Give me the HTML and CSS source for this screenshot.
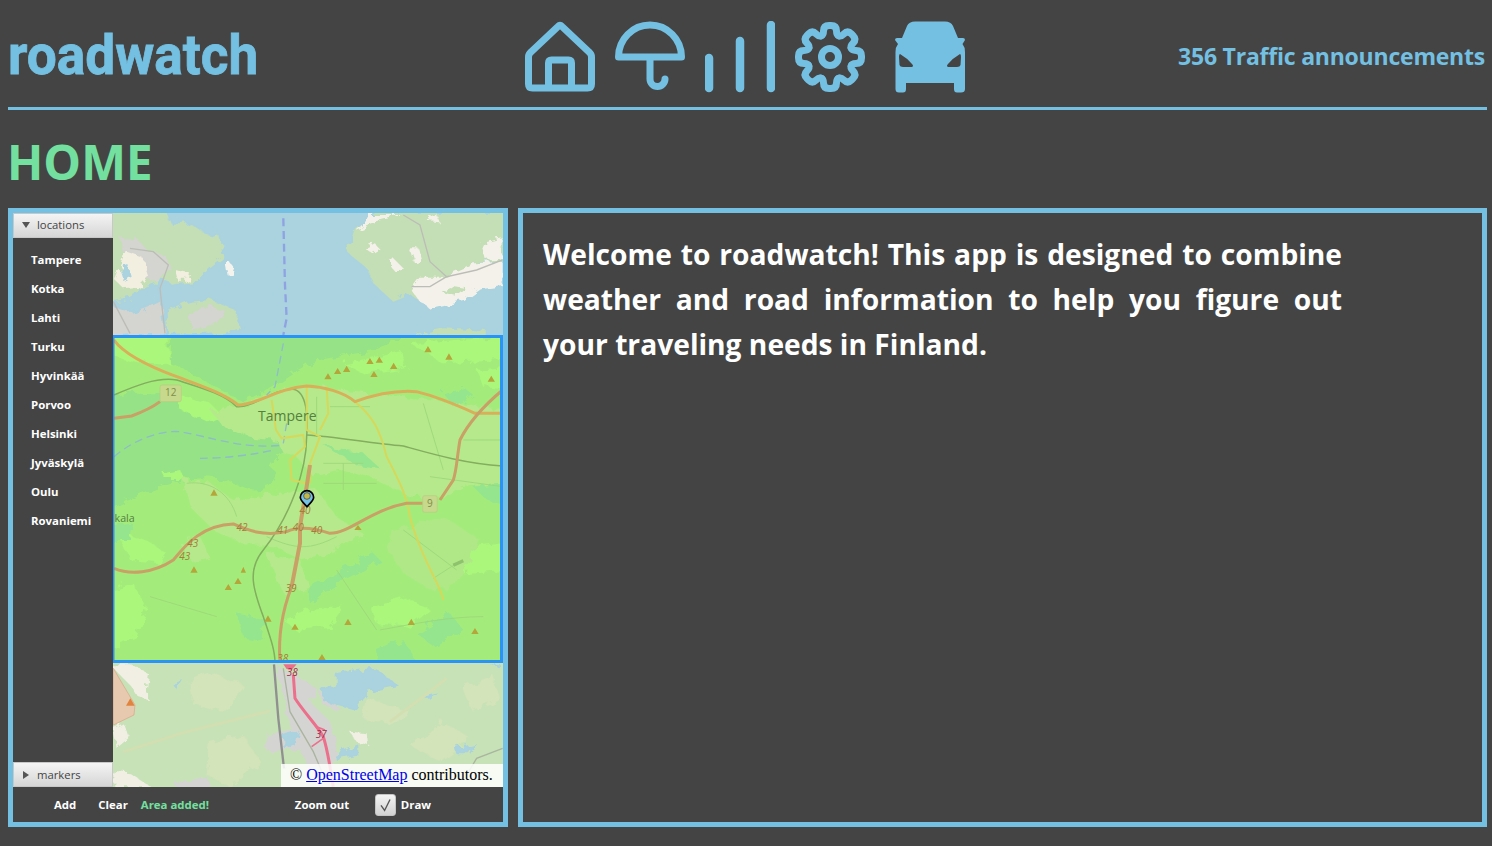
FILE: index.html
```html
<!DOCTYPE html>
<html>
  <head>
    <title>roadwatch</title>
    <link rel="stylesheet" href="styles.css">
  </head>
  <body>
    <header class="top-bar">
      <div class="logo"><span class="logo-text">roadwatch</span></div>

      <!-- Main navigation icons -->
      <nav class="nav-icons">
        <svg class="icon" viewBox="0 0 70 72">
          <path d="M3.5 36 Q3.5 33 6 31 L33 5.5 Q35 3.5 37 5.5 L64 31 Q66.5 33 66.5 36 V63 Q66.5 67 62.5 67 H7.5 Q3.5 67 3.5 63 Z M23.5 67 V42 Q23.5 39 26.5 39 H43.5 Q46.5 39 46.5 42 V67"/>
        </svg>
        <svg class="icon" viewBox="0 0 70 72">
          <path d="M3.5 36 A31.5 32 0 0 1 66.5 36 Z M35 38 V58 A7.5 7.5 0 0 0 50 58"/>
        </svg>
        <svg class="icon icon-bars" viewBox="0 0 70 72">
          <path d="M4 37 V67 M35 20 V67 M66 4 V67"/>
        </svg>
        <svg class="icon" viewBox="-35 -36 70 72">
          <defs>
            <path id="gear-tooth" d="M-8.8 -21.2 Q-6.5 -22 -6.5 -26 Q-6.5 -31.5 -1 -31.5 H1 Q6.5 -31.5 6.5 -26 Q6.5 -22 8.8 -21.2"/>
          </defs>
          <use href="#gear-tooth"/>
          <use href="#gear-tooth" transform="rotate(45)"/>
          <use href="#gear-tooth" transform="rotate(90)"/>
          <use href="#gear-tooth" transform="rotate(135)"/>
          <use href="#gear-tooth" transform="rotate(180)"/>
          <use href="#gear-tooth" transform="rotate(225)"/>
          <use href="#gear-tooth" transform="rotate(270)"/>
          <use href="#gear-tooth" transform="rotate(315)"/>
          <circle r="8.5"/>
        </svg>
        <svg class="icon icon-car" viewBox="0 0 70 72">
          <path class="car-body" d="M20 0.5 H50 Q56 0.5 58 5 L63 17 H68 Q70 17 70 19 L67.5 23 Q70 26 70 31 V68 Q70 71.5 66 71.5 H62 Q59 71.5 59 68 V62 H11 V68 Q11 71.5 8 71.5 H4 Q0.5 71.5 0.5 68 V31 Q0.5 26 3 23 L0 19 Q0 17 2 17 H7 L12 5 Q14 0.5 20 0.5 Z"/>
          <path class="car-light" d="M5 33 Q4 33 4 36 L4.5 44 Q5 46 8 46 L17 46 Q19 45 17 43 Q12 37 5 33 Z M65 33 Q66 33 66 36 L65.5 44 Q65 46 62 46 L53 46 Q51 45 53 43 Q58 37 65 33 Z"/>
        </svg>
      </nav>

      <div class="announcements">356 Traffic announcements</div>
    </header>

    <h1 class="page-title">HOME</h1>

    <main class="panels">
      <section class="map-panel">
        <div class="map-body">
          <!-- Locations accordion -->
          <aside class="sidebar">
            <div class="accordion-head"><span class="arrow-down"></span>locations</div>
            <ul class="location-list">
              <li>Tampere</li>
              <li>Kotka</li>
              <li>Lahti</li>
              <li>Turku</li>
              <li>Hyvinkää</li>
              <li>Porvoo</li>
              <li>Helsinki</li>
              <li>Jyväskylä</li>
              <li>Oulu</li>
              <li>Rovaniemi</li>
            </ul>
            <div class="accordion-head accordion-markers"><span class="arrow-right"></span>markers</div>
          </aside>

          <div class="map">
            <svg class="map-art" viewBox="0 0 390 574">
              <defs>
                <clipPath id="top-clip"><rect width="390" height="125"/></clipPath>
                <clipPath id="area-clip"><rect x="12" y="18" width="1166" height="979"/></clipPath>
                <clipPath id="bottom-clip"><rect y="450" width="390" height="124"/></clipPath>
                <filter id="rough" x="-5%" y="-5%" width="110%" height="110%">
                  <feTurbulence type="fractalNoise" baseFrequency="0.035" numOctaves="3" seed="4" result="noise"/>
                  <feDisplacementMap in="SourceGraphic" in2="noise" scale="34"/>
                  <feGaussianBlur stdDeviation="1.2"/>
                </filter>
              </defs>

              <!-- North part of the map, above the selected area -->
              <g clip-path="url(#top-clip)">
                <rect width="390" height="125" fill="#aad3df"/>
                <g transform="translate(-3 -8) scale(0.3333)">
                  <g filter="url(#rough)">
                    <path fill="#c4dfb5" d="M0 0 H160 L185 60 L240 55 L280 85 L335 100 L340 160 L300 190 L250 235 L205 240 L165 225 L130 240 L60 280 L0 290 Z"/>
                    <path fill="#d4d4d0" d="M30 100 L80 100 L110 135 L165 150 L180 185 L150 230 L110 225 L70 170 L40 140 Z"/>
                    <path fill="#f2efe0" d="M15 225 L50 140 L95 155 L115 215 L85 245 L40 250 Z"/>
                    <path fill="#f2efe0" d="M195 195 L240 205 L235 230 L205 230 Z"/>
                    <path fill="#aad3df" d="M28 190 L55 180 L65 215 L40 228 Z"/>
                    <path fill="#aad3df" d="M62 310 L90 250 L135 235 L150 250 L130 290 L90 320 Z"/>
                    <path fill="#d4d4d0" d="M0 300 L60 325 L110 310 L150 290 L165 385 L0 395 Z"/>
                    <path fill="#c4dfb5" d="M170 320 L240 290 L300 285 L375 315 L390 370 L340 385 L175 390 Z"/>
                    <path fill="#d4d4d0" d="M240 330 L300 300 L350 320 L320 360 L240 375 Z"/>
                    <path fill="#c4dfb5" d="M735 70 L800 20 H1190 V165 L1090 175 L1060 230 L1000 280 L960 300 L900 270 L850 290 L790 235 L770 190 L712 140 Z"/>
                    <path fill="#f4f1ea" d="M735 75 L780 30 H880 L800 48 Z M850 160 L880 190 L860 205 L838 180 Z M765 130 L795 115 L812 135 L790 148 Z M900 130 L925 130 L935 170 L915 175 Z M950 50 L980 28 L990 55 Z M1115 115 L1178 100 V155 L1130 165 Z"/>
                    <path fill="#f4f1ea" d="M925 215 L1000 215 L1090 175 L1178 170 V240 L1110 250 L1060 285 L960 310 L925 285 L900 250 Z"/>
                    <path fill="#c4dfb5" d="M1010 240 L1070 250 L1040 275 L1000 265 Z M900 395 L1000 370 L1130 378 V395 Z"/>
                    <path fill="#f4f3ee" d="M345 180 L360 172 L376 192 L368 210 L350 208 Z"/>
                  </g>
                  <path fill="none" stroke="#bdbdb8" stroke-width="4" d="M880 30 L930 60 L960 170 L1010 215 L1100 195 L1178 165 M905 245 L960 245 L1010 215 M60 130 L130 140 L175 180 L150 250 L165 385 M10 290 L60 385"/>
                  <path fill="none" stroke="#8fa3e3" stroke-width="7" stroke-dasharray="24 14" d="M520 40 L525 240 L530 340 L520 390"/>
                </g>
              </g>

              <!-- Selected area, tinted green. Coordinates are 3x -->
              <g transform="translate(-3 117) scale(0.3333)" clip-path="url(#area-clip)">
                <rect x="12" y="18" width="1166" height="979" fill="#a3ec7b"/>

                <g filter="url(#rough)">
                  <!-- Lakes -->
                  <path fill="#95e386" d="M180 0 H890 C880 60 720 70 630 90 C560 110 500 170 400 215 C330 180 250 130 180 100 Z"/>
                  <path fill="#95e386" d="M0 195 C80 180 180 190 280 215 C330 280 420 320 520 330 C560 350 490 380 480 410 C530 440 470 490 420 480 C340 440 290 440 220 450 C150 470 70 500 0 540 Z"/>

                  <!-- Brighter open land -->
                  <path fill="#abf77b" d="M0 0 H170 L180 100 C120 110 40 90 0 70 Z"/>
                  <path fill="#abf77b" d="M700 100 L780 85 L870 60 L890 110 L760 130 Z M900 40 L1180 20 V90 L1000 100 Z M1100 120 L1190 110 V180 L1120 170 Z"/>
                  <path fill="#abf77b" d="M0 780 L70 760 L110 830 L80 920 L0 960 Z M20 600 L120 640 L170 670 L150 700 L60 690 Z M520 870 L600 840 L700 830 L660 890 L560 900 Z M780 830 L880 800 L960 840 L900 890 L800 880 Z M1040 660 L1178 640 V720 L1060 730 Z"/>
                  <path fill="#abf77b" d="M200 195 L300 220 L340 260 L300 280 L210 240 Z M160 430 L210 420 L230 450 L170 450 Z"/>

                  <!-- Built up parts -->
                  <path fill="#b6e98c" d="M300 240 L400 230 L480 190 L590 170 L760 185 L980 210 L1190 240 V460 L1060 470 L1010 500 L900 500 L800 450 L700 420 L610 440 L560 380 L520 370 L500 330 L420 320 L340 290 Z"/>
                  <path fill="#b6e98c" d="M220 450 L300 460 L370 510 L520 490 L620 480 L680 560 L760 610 L700 650 L580 690 L500 650 L400 640 L310 600 L240 530 Z"/>
                  <path fill="#b0e887" d="M860 600 L1000 560 L1110 630 L1060 730 L980 790 L880 730 L830 650 Z"/>
                  <path fill="#b6e98c" d="M210 640 L270 620 L300 680 L250 700 Z M470 670 L570 690 L600 770 L520 790 Z"/>

                  <!-- Small waters and wet forest -->
                  <path fill="#95e58f" d="M590 780 L660 740 L790 670 L815 695 L720 740 L640 790 L600 820 Z M1000 190 L1060 170 L1090 195 L1030 230 Z M1090 470 L1190 460 V530 L1130 510 Z M800 960 L880 930 L930 1010 H810 Z M920 910 L1020 850 L1060 900 L970 950 Z M380 850 L470 870 L450 930 L400 920 Z M0 590 L70 580 L60 630 L0 630 Z M640 345 L760 370 L810 415 L740 405 Z"/>
                </g>

                <!-- Street lines -->
                <path fill="none" stroke="#9bd679" stroke-width="2.5" d="M640 400 H760 M640 460 H800 M700 400 V480 M620 200 V320 M660 230 L780 230 M940 220 L1000 420 M1060 330 H1178 M960 440 L1178 470 M230 460 C300 450 360 490 380 560 M470 620 C560 660 600 660 680 620 M810 900 C920 880 1020 860 1120 860 M880 600 L1040 720 M120 800 L320 860 M680 720 L800 900 M1040 700 L970 745"/>
                <path fill="none" stroke="#8fc26c" stroke-width="10" d="M1060 692 L1030 706"/>

                <!-- Lake routes -->
                <path fill="none" stroke="#8fbcc9" stroke-width="4" stroke-dasharray="24 14" d="M12 380 C70 330 150 300 210 305 C300 320 400 360 520 345 M270 385 C340 385 430 375 490 360 M520 40 L495 170 L470 195 M530 280 L520 340"/>

                <!-- Rail lines -->
                <path fill="none" stroke="#83ad5f" stroke-width="4.5" d="M12 195 C70 170 140 140 200 150 C260 170 340 190 380 230 C430 235 490 175 550 178 C590 185 595 260 590 320 C590 420 540 560 460 660 C410 720 430 780 460 860 C480 920 495 960 495 997"/>
                <path fill="none" stroke="#83ad5f" stroke-width="4.5" d="M590 315 C680 320 780 340 880 348 C960 370 1060 400 1178 408"/>

                <!-- Yellow streets -->
                <path fill="none" stroke="#d6d85a" stroke-width="6" d="M590 170 V300 L630 320 L600 400 V460 M485 210 L498 300 L515 325 L580 315 L585 350 L540 390 L545 450 L590 460"/>
                <path fill="none" stroke="#d6d85a" stroke-width="6" d="M650 170 L655 250 L630 300 M735 215 C790 260 810 300 830 380 C860 440 890 490 900 560 C930 680 990 760 1000 810"/>

                <!-- Main roads -->
                <g fill="none" stroke="#c9a066" stroke-width="9">
                  <path stroke="#d8b05a" d="M12 30 C40 70 120 110 200 140 C280 170 340 190 385 225 C440 225 500 175 590 168 C640 170 700 185 735 215 C790 195 860 180 920 185 C980 200 1040 225 1095 250 H1178"/>
                  <path d="M1178 180 C1130 220 1080 270 1050 330 C1040 390 1040 420 1030 450 L990 510"/>
                  <path d="M12 265 L65 258 C100 245 130 230 150 215"/>
                  <path d="M12 715 C60 735 130 730 190 690 C230 640 280 585 370 582 C410 600 460 620 530 605 C560 590 600 590 660 610 C720 610 780 540 890 520 H940"/>
                  <path stroke-width="12" d="M600 405 L590 470 L570 590 L570 640 L545 770"/>
                  <path d="M545 770 C510 860 505 930 510 997"/>
                </g>

                <!-- Forest peaks -->
                <path fill="#b5a63c" d="M954 48 L965 67 H943 Z M1017 70 L1028 89 H1006 Z M780 84 L791 102 H769 Z M808 80 L819 98 H797 Z M851 98 L862 117 H840 Z M710 107 L721 126 H699 Z M683 114 L694 132 H672 Z M654 130 L665 148 H643 Z M792 123 L803 141 H781 Z M1144 137 L1155 155 H1133 Z M312 478 L323 497 H301 Z M744 585 L755 600 H733 Z M252 709 L263 728 H241 Z M400 710 L408 728 H392 Z M384 743 L395 762 H373 Z M355 762 L366 780 H344 Z M474 856 L485 875 H463 Z M555 881 L566 899 H544 Z M714 866 L725 885 H703 Z M904 866 L915 885 H893 Z M1095 894 L1106 912 H1084 Z M636 972 L647 990 H625 Z"/>

                <!-- Road shields -->
                <rect x="150" y="165" width="64" height="50" rx="6" fill="#c6d98c" stroke="#b8cc80" stroke-width="2"/>
                <rect x="938" y="497" width="44" height="50" rx="6" fill="#c6d98c" stroke="#b8cc80" stroke-width="2"/>
                <text class="map-shield" x="182" y="198">12</text>
                <text class="map-shield" x="960" y="532">9</text>

                <!-- Labels -->
                <text class="map-city" x="532" y="272">Tampere</text>
                <text class="map-town" x="44" y="576">kala</text>
                <g class="map-ref">
                  <text x="396" y="602">42</text>
                  <text x="248" y="652">43</text>
                  <text x="224" y="690">43</text>
                  <text x="518" y="612">41</text>
                  <text x="565" y="604">40</text>
                  <text x="620" y="611">40</text>
                  <text x="585" y="552">40</text>
                  <text x="543" y="785">39</text>
                  <text x="518" y="997">38</text>
                </g>

                <!-- Marker -->
                <path fill="#74c0e6" stroke="#000" stroke-width="5" d="M591 530 C580 518 571 512 571 502 A20 20 0 0 1 611 502 C611 512 602 518 591 530 Z"/>
                <circle cx="591" cy="498" r="10" fill="#c0b84c" stroke="#333" stroke-width="2"/>
              </g>

              <!-- South part of the map -->
              <g clip-path="url(#bottom-clip)">
                <rect y="450" width="390" height="124" fill="#c7e2b6"/>
                <g transform="translate(-3 442) scale(0.3333)">
                  <g filter="url(#rough)">
                    <path fill="#d3e3ba" d="M230 80 L300 50 L400 90 L350 170 L250 150 Z M300 260 L400 240 L450 320 L360 395 L290 360 Z M900 270 L1000 200 L1080 250 L990 320 Z M770 130 L900 170 L850 210 L760 190 Z M1060 100 L1150 60 L1170 130 L1090 170 Z"/>
                    <path fill="#f1efe4" d="M0 28 L60 28 L120 60 L110 130 L80 120 L60 90 L30 60 Z M10 220 L40 205 L55 250 L20 280 Z M10 350 L60 355 L130 400 H10 Z"/>
                    <path fill="#d4d4d2" d="M500 30 L570 70 L620 100 L600 140 L660 200 L680 280 L650 400 L620 400 L570 280 L470 290 L470 240 L540 220 L520 120 Z M200 385 L290 365 L310 400 L200 400 Z M620 100 L700 170 L640 150 Z"/>
                    <path fill="#aad3df" d="M680 50 L790 35 L870 95 L770 115 L730 165 L640 140 L635 105 L680 90 Z M520 240 L565 225 L555 260 L520 282 Z M670 300 L745 268 L745 305 L680 318 Z M1035 280 L1100 265 L1080 298 L1040 298 Z M1140 28 L1170 28 L1170 40 Z M190 90 L222 78 L205 108 Z M940 125 L985 115 L960 135 Z"/>
                    <path fill="#f1efe4" d="M720 230 L770 235 L775 270 L740 260 Z"/>
                  </g>
                  <path fill="#e6c9ae" stroke="#d9a58b" stroke-width="2" d="M10 40 L75 150 L72 180 L10 210 Z"/>
                  <path fill="#e0843f" d="M61 130 L74 152 H48 Z"/>
                  <path fill="none" stroke="#d3dfb0" stroke-width="8" d="M40 290 L230 230 L480 168 M840 200 L960 110 L1010 70"/>
                  <path fill="none" stroke="#aab5a0" stroke-width="4" d="M520 40 L540 170 L610 290 L640 360 M1178 280 L1100 310 L1070 360"/>
                  <path fill="none" stroke="#909090" stroke-width="7" d="M492 28 L505 190 L522 340"/>
                  <path fill="none" stroke="#ec6f8c" stroke-width="9" d="M550 60 L555 130 C580 170 620 210 640 245 C655 290 660 340 670 395"/>
                  <path fill="none" stroke="#ec6f8c" stroke-width="5" d="M605 275 L640 250 M620 215 L645 225"/>
                  <path fill="#ec6f8c" d="M520 28 H560 L545 45 L530 42 Z"/>
                  <text class="map-ref-red" x="547" y="62">38</text>
                  <text class="map-ref-red" x="634" y="250">37</text>
                </g>
              </g>

              <!-- Edge of the selected area -->
              <rect x="0" y="123.5" width="388.5" height="325" fill="none" stroke="#2a94f5" stroke-width="3"/>
            </svg>
            <div class="attribution">© <a href="#">OpenStreetMap</a> contributors.</div>
          </div>
        </div>

        <!-- Map tools -->
        <div class="map-tools">
          <span class="tool tool-add">Add</span>
          <span class="tool tool-clear">Clear</span>
          <span class="tool tool-status">Area added!</span>
          <span class="tool tool-zoom">Zoom out</span>
          <span class="checkbox">
            <svg viewBox="0 0 21 22"><path d="M5.5 11.5 L9.5 17 L15.5 5"/></svg>
          </span>
          <span class="tool">Draw</span>
        </div>
      </section>

      <section class="intro">
        <p>Welcome to roadwatch! This app is designed to combine weather and road information to help you figure out your traveling needs in Finland.</p>
      </section>
    </main>
  </body>
</html>
```

FILE: styles.css
```css
body {
  margin: 0;
  height: 846px;
  overflow: hidden;
  background-color: #444444;
  font-family: "Open Sans", "Noto Sans", sans-serif;
}

/* Header */
.top-bar {
  display: grid;
  grid-template-columns: 1fr auto 1fr;
  align-items: center;
  height: 107px;
  margin: 0 5px 0 8px;
  border-bottom: 3px solid #74c0e2;
}

.logo {
  font-family: Roboto, sans-serif;
  font-size: 56px;
  font-weight: 700;
  color: #74c0e2;
  line-height: 1;
  padding-top: 3px;
}

.logo-text {
  display: inline-block;
  transform: scaleX(0.95);
  transform-origin: left center;
  -webkit-text-stroke: 0.8px #74c0e2;
}

.nav-icons {
  display: flex;
  gap: 20px;
  padding: 7px 6px 0 0;
}

.icon {
  width: 70px;
  height: 72px;
  fill: none;
  stroke: #74c0e2;
  stroke-width: 7;
  stroke-linecap: round;
  stroke-linejoin: round;
}

.icon-bars {
  stroke-width: 8.5;
}

.icon-car {
  margin-left: 10px;
  stroke: none;
}

.car-body {
  fill: #74c0e2;
}

.car-light {
  fill: #444444;
}

.announcements {
  justify-self: end;
  padding: 5px 2px 0 0;
  font-size: 23px;
  font-weight: 700;
  letter-spacing: -0.22px;
  color: #74c0e2;
}

.page-title {
  margin: 0;
  padding-left: 7px;
  height: 98px;
  font-size: 47.5px;
  font-weight: 700;
  line-height: 104px;
  color: #73e09f;
}

/* Panels */
.panels {
  display: grid;
  grid-template-columns: 500px 969px;
  gap: 10px;
  height: 619px;
  margin-left: 8px;
}

.map-panel,
.intro {
  box-sizing: border-box;
  border: 5px solid #74c0e2;
}

.map-panel {
  display: flex;
  flex-direction: column;
}

.map-body {
  display: flex;
  height: 574px;
}

.sidebar {
  display: flex;
  flex-direction: column;
  flex: none;
  width: 100px;
}

.accordion-head {
  box-sizing: border-box;
  flex: none;
  display: flex;
  align-items: center;
  height: 25px;
  padding-left: 8px;
  padding-bottom: 2px;
  border: 1px solid #c8c8c8;
  background: linear-gradient(#f4f4f4, #d6d6d6);
  font-size: 11.3px;
  color: #444444;
}

.accordion-markers {
  padding-bottom: 0;
}

.arrow-down {
  width: 0;
  height: 0;
  margin-right: 7px;
  border-left: 4px solid transparent;
  border-right: 4px solid transparent;
  border-top: 6px solid #555555;
}

.arrow-right {
  width: 0;
  height: 0;
  margin: 0 8px 0 1px;
  border-top: 4px solid transparent;
  border-bottom: 4px solid transparent;
  border-left: 6px solid #555555;
}

.location-list {
  flex: 1;
  margin: 0;
  padding: 7px 0 0 18px;
  list-style: none;
}

.location-list li {
  height: 29px;
  font-size: 11.4px;
  font-weight: 700;
  line-height: 29px;
  color: #ffffff;
}

/* Map */
.map {
  position: relative;
  flex: 1;
}

.map-art {
  display: block;
  width: 390px;
  height: 574px;
}

.map-city {
  font-size: 42px;
  text-anchor: middle;
  fill: #55803f;
}

.map-town {
  font-size: 32px;
  text-anchor: middle;
  fill: #55803f;
}

.map-shield {
  font-size: 30px;
  text-anchor: middle;
  fill: #7f8f4a;
}

.map-ref text {
  font-size: 30px;
  font-style: italic;
  text-anchor: middle;
  fill: #a67c3a;
}

.map-ref-red {
  font-size: 30px;
  font-style: italic;
  text-anchor: middle;
  fill: #a52a4a;
}

.attribution {
  position: absolute;
  right: 0;
  bottom: 0;
  box-sizing: border-box;
  width: 222px;
  height: 23px;
  padding-left: 9px;
  background-color: rgba(255, 255, 255, 0.85);
  font-family: "Liberation Serif", serif;
  font-size: 16px;
  line-height: 22px;
  color: #000000;
  white-space: nowrap;
}

.attribution a {
  color: #0000ee;
}

/* Toolbar under the map */
.map-tools {
  flex: 1;
  display: flex;
  align-items: center;
  padding-left: 41px;
}

.tool {
  font-size: 11.4px;
  font-weight: 700;
  color: #ffffff;
}

.tool-add {
  margin-right: 22px;
}

.tool-clear {
  margin-right: 13px;
}

.tool-status {
  width: 154px;
  color: #73e09f;
}

.tool-zoom {
  width: 80px;
}

.checkbox {
  box-sizing: border-box;
  width: 21px;
  height: 22px;
  margin-right: 5px;
  border: 1px solid #c4c4c4;
  border-radius: 3px;
  background: linear-gradient(#f4f4f4, #d2d2d2);
}

.checkbox svg {
  display: block;
  width: 19px;
  height: 20px;
  fill: none;
  stroke: #555555;
  stroke-width: 1.5;
}

/* Welcome text */
.intro {
  padding: 19px 20px;
}

.intro p {
  width: 799px;
  margin: 0;
  font-size: 28.2px;
  font-weight: 700;
  line-height: 45px;
  color: #ffffff;
  text-align: justify;
}
```
